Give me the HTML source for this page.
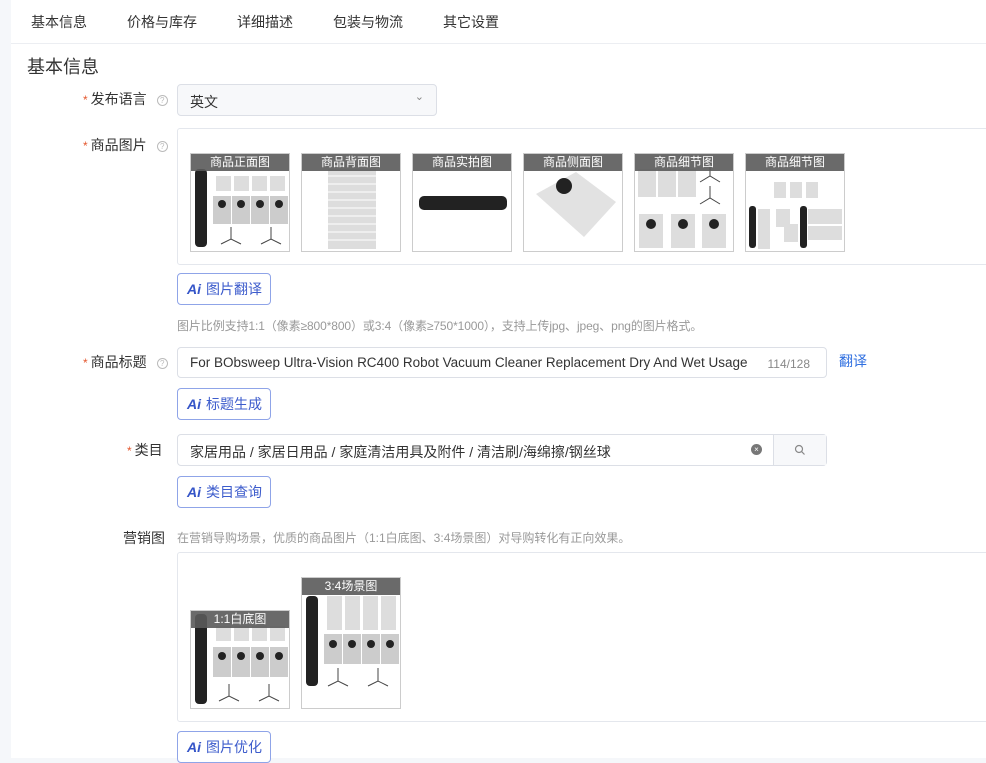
<!DOCTYPE html>
<html><head><meta charset="utf-8"><style>
*{margin:0;padding:0;box-sizing:border-box}
body{width:986px;height:758px;overflow:hidden;background:#f5f7fa;font-family:"Liberation Sans","Noto Sans CJK SC",sans-serif;color:#333;position:relative}
.main{position:absolute;left:11px;top:0;width:975px;height:758px;background:#fff}
.a{position:absolute;white-space:nowrap}
.tab{font-size:14px;color:#333;top:12px}
.lbl{font-size:14px;color:#333;text-align:right}
.star{color:#e4572e;font-size:12px;margin-right:3px}
.q{display:inline-block;width:11px;height:11px;border:1px solid #bbb;border-radius:50%;font-size:8px;line-height:9px;text-align:center;color:#bbb;margin-left:10px;vertical-align:1px}
.inp{border:1px solid #dcdfe6;border-radius:4px;background:#fff;font-size:14px;color:#333}
.ai{border:1px solid #8fa4e8;border-radius:4px;height:32px;width:94px;font-size:14px;color:#3d5ccc;line-height:30px;padding-left:9px;background:#fff}
.ai b{font-style:italic;font-weight:bold;margin-right:5px;color:#3555c8}
.th{position:absolute;width:100px;border:1px solid #ccc;background:#fff;overflow:hidden}
.th .h{position:absolute;left:0;top:0;width:100%;height:17px;background:rgba(90,90,90,.9);color:#fff;font-size:12px;text-align:center;line-height:17px;z-index:2}
</style></head><body>
<div class="main">
<div style="position:absolute;left:0;top:43px;width:975px;height:1px;background:#eceef2"></div>
<div class="a tab" style="left:20px">基本信息</div>
<div class="a tab" style="left:116px">价格与库存</div>
<div class="a tab" style="left:226px">详细描述</div>
<div class="a tab" style="left:322px">包装与物流</div>
<div class="a tab" style="left:432px">其它设置</div>
<div class="a" style="left:16px;top:53px;font-size:18px;color:#333">基本信息</div>

<div class="a lbl" style="left:72px;top:89px"><span class="star">*</span>发布语言<span class="q">?</span></div>
<div class="a inp" style="left:166px;top:84px;width:260px;height:32px;background:#f7f8fa;padding:7px 12px">英文<span style="position:absolute;right:12px;top:5px;font-size:11px;color:#888">&#8964;</span></div>

<div class="a lbl" style="left:72px;top:135px"><span class="star">*</span>商品图片<span class="q">?</span></div>
<div class="a" style="left:166px;top:128px;width:820px;height:137px;border:1px solid #e4e7ed;border-radius:3px"></div>

<div class="a ai" style="left:166px;top:273px"><b>Ai</b>图片翻译</div>
<div class="a" style="left:166px;top:317px;font-size:12px;color:#999;letter-spacing:-0.1px">图片比例支持1:1（像素≥800*800）或3:4（像素≥750*1000），支持上传jpg、jpeg、png的图片格式。</div>

<div class="a lbl" style="left:72px;top:352px"><span class="star">*</span>商品标题<span class="q">?</span></div>
<div class="a inp" style="left:166px;top:347px;width:650px;height:31px;padding:6px 12px;font-size:13.5px;line-height:18px">For BObsweep Ultra-Vision RC400 Robot Vacuum Cleaner Replacement Dry And Wet Usage<span style="position:absolute;right:16px;top:7px;font-size:12px;color:#888">114/128</span></div>
<div class="a" style="left:828px;top:351px;font-size:14px;color:#2f6fe0">翻译</div>
<div class="a ai" style="left:166px;top:388px"><b>Ai</b>标题生成</div>

<div class="a lbl" style="left:116px;top:440px"><span class="star">*</span>类目</div>
<div class="a inp" style="left:166px;top:434px;width:650px;height:32px;padding:7px 12px">家居用品 / 家居日用品 / 家庭清洁用具及附件 / 清洁刷/海绵擦/钢丝球
<span style="position:absolute;right:64px;top:9px;width:11px;height:11px;border-radius:50%;background:#777;color:#fff;font-size:8px;line-height:11px;text-align:center">×</span>
<span style="position:absolute;right:0;top:0;width:53px;height:30px;border-left:1px solid #dcdfe6;background:#f7f8fa;text-align:center"><svg width="12" height="12" style="margin-top:9px" viewBox="0 0 12 12"><circle cx="5" cy="5" r="3.5" fill="none" stroke="#888" stroke-width="1.2"/><path d="M7.6 7.6L10.5 10.5" stroke="#888" stroke-width="1.2"/></svg></span></div>
<div class="a ai" style="left:166px;top:476px"><b>Ai</b>类目查询</div>

<div class="a lbl" style="left:112px;top:528px">营销图</div>
<div class="a" style="left:166px;top:529px;font-size:12px;color:#999">在营销导购场景，优质的商品图片（1:1白底图、3:4场景图）对导购转化有正向效果。</div>
<div class="a" style="left:166px;top:552px;width:820px;height:170px;border:1px solid #e4e7ed;border-radius:3px"></div>
<div class="a ai" style="left:166px;top:731px"><b>Ai</b>图片优化</div>
</div>

<div class="th" style="left:190px;top:153px;height:99px"><div class="h">商品正面图</div>
<svg width="100" height="99"><rect x="4" y="15" width="12" height="78" rx="4" fill="#222"/><g fill="#ddd"><rect x="25" y="22" width="15" height="15"/><rect x="43" y="22" width="15" height="15"/><rect x="61" y="22" width="15" height="15"/><rect x="79" y="22" width="15" height="15"/></g><g fill="#ccc"><rect x="22" y="42" width="18" height="28"/><rect x="41" y="42" width="18" height="28"/><rect x="60" y="42" width="18" height="28"/><rect x="79" y="42" width="18" height="28"/></g><g fill="#222"><circle cx="31" cy="50" r="4"/><circle cx="50" cy="50" r="4"/><circle cx="69" cy="50" r="4"/><circle cx="88" cy="50" r="4"/></g><path d="M30 90l10-5 10 5M40 85v-12M70 90l10-5 10 5M80 85v-12" stroke="#444" fill="none"/></svg></div>
<div class="th" style="left:301px;top:153px;height:99px"><div class="h">商品背面图</div>
<svg width="100" height="99"><rect x="26" y="15" width="48" height="80" fill="#ddd"/><g stroke="#fff"><path d="M26 22h48M26 30h48M26 38h48M26 46h48M26 54h48M26 62h48M26 70h48M26 78h48M26 86h48"/></g></svg></div>
<div class="th" style="left:412px;top:153px;height:99px"><div class="h">商品实拍图</div>
<svg width="100" height="99"><rect x="6" y="42" width="88" height="14" rx="5" fill="#222"/></svg></div>
<div class="th" style="left:523px;top:153px;height:99px"><div class="h">商品侧面图</div>
<svg width="100" height="99"><path d="M12 40l40-22 40 30-32 35z" fill="#e2e2e2"/><circle cx="40" cy="32" r="8" fill="#222"/></svg></div>
<div class="th" style="left:634px;top:153px;height:99px"><div class="h">商品细节图</div>
<svg width="100" height="99"><g fill="#ddd"><rect x="3" y="15" width="18" height="28"/><rect x="23" y="15" width="18" height="28"/><rect x="43" y="15" width="18" height="28"/><rect x="4" y="60" width="24" height="34"/><rect x="36" y="60" width="24" height="34"/><rect x="67" y="60" width="24" height="34"/></g><g fill="#222"><circle cx="16" cy="70" r="5"/><circle cx="48" cy="70" r="5"/><circle cx="79" cy="70" r="5"/></g><path d="M65 28l10-6 10 6M75 22V8M65 50l10-6 10 6M75 44V32" stroke="#444" fill="none"/></svg></div>
<div class="th" style="left:745px;top:153px;height:99px"><div class="h">商品细节图</div>
<svg width="100" height="99"><g fill="#ddd"><rect x="28" y="28" width="12" height="16"/><rect x="44" y="28" width="12" height="16"/><rect x="60" y="28" width="12" height="16"/><rect x="12" y="55" width="12" height="40"/><rect x="30" y="55" width="14" height="18"/><rect x="38" y="70" width="14" height="18"/><rect x="62" y="55" width="34" height="15"/><rect x="62" y="72" width="34" height="14"/></g><rect x="3" y="52" width="7" height="42" rx="3" fill="#222"/><rect x="54" y="52" width="7" height="42" rx="3" fill="#222"/></svg></div>

<div class="th" style="left:190px;top:610px;height:99px"><div class="h">1:1白底图</div>
<svg width="100" height="99"><rect x="4" y="3" width="12" height="90" rx="4" fill="#222"/><g fill="#ddd"><rect x="25" y="15" width="15" height="15"/><rect x="43" y="15" width="15" height="15"/><rect x="61" y="15" width="15" height="15"/><rect x="79" y="15" width="15" height="15"/></g><g fill="#ccc"><rect x="22" y="36" width="18" height="30"/><rect x="41" y="36" width="18" height="30"/><rect x="60" y="36" width="18" height="30"/><rect x="79" y="36" width="18" height="30"/></g><g fill="#222"><circle cx="31" cy="45" r="4"/><circle cx="50" cy="45" r="4"/><circle cx="69" cy="45" r="4"/><circle cx="88" cy="45" r="4"/></g><path d="M28 90l10-5 10 5M38 85v-12M68 90l10-5 10 5M78 85v-12" stroke="#444" fill="none"/></svg></div>
<div class="th" style="left:301px;top:577px;height:132px"><div class="h">3:4场景图</div>
<svg width="100" height="132"><rect x="4" y="18" width="12" height="90" rx="4" fill="#222"/><g fill="#ddd"><rect x="25" y="18" width="15" height="34"/><rect x="43" y="18" width="15" height="34"/><rect x="61" y="18" width="15" height="34"/><rect x="79" y="18" width="15" height="34"/></g><g fill="#ccc"><rect x="22" y="56" width="18" height="30"/><rect x="41" y="56" width="18" height="30"/><rect x="60" y="56" width="18" height="30"/><rect x="79" y="56" width="18" height="30"/></g><g fill="#222"><circle cx="31" cy="66" r="4"/><circle cx="50" cy="66" r="4"/><circle cx="69" cy="66" r="4"/><circle cx="88" cy="66" r="4"/></g><path d="M26 108l10-5 10 5M36 103V90M66 108l10-5 10 5M76 103V90" stroke="#444" fill="none"/></svg></div>
</body></html>
